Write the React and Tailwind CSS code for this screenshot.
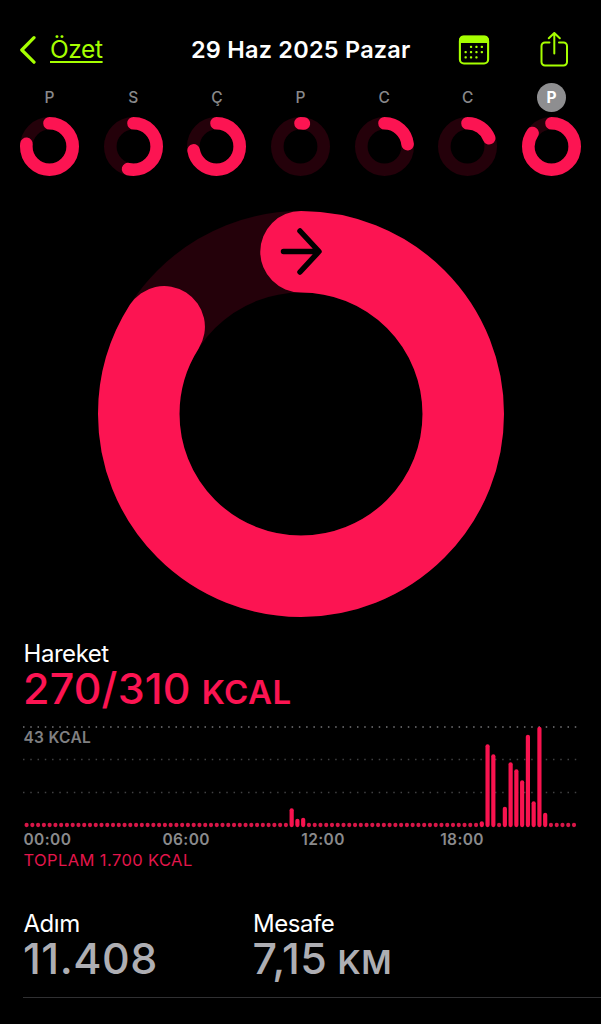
const days = [
  { label: "P", progress: 0.764 },
  { label: "S", progress: 0.535 },
  { label: "Ç", progress: 0.718 },
  { label: "P", progress: 0.024 },
  { label: "C", progress: 0.232 },
  { label: "C", progress: 0.19 },
  { label: "P", progress: 0.843, selected: true },
];

// one bar per 15 minutes, quiet slots stay at the minimum height
const SLOTS = 96;
const activeSlots = {
  46: 19,
  47: 8.5,
  48: 9.5,
  79: 6,
  80: 83,
  81: 73,
  83: 20.5,
  84: 65,
  85: 58,
  86: 47,
  87: 92.5,
  88: 26,
  89: 100.5,
  90: 14.5,
};

function Ring({ size, stroke, progress, children }) {
  const r = (size - stroke) / 2;
  const c = size / 2;
  const length = 2 * Math.PI * r;
  return (
    <svg width={size} height={size} viewBox={`0 0 ${size} ${size}`} className="block shrink-0">
      <circle cx={c} cy={c} r={r} fill="none" stroke="#24010a" strokeWidth={stroke} />
      <circle
        cx={c}
        cy={c}
        r={r}
        fill="none"
        stroke="#fc1452"
        strokeWidth={stroke}
        strokeLinecap="round"
        strokeDasharray={`${length * progress} ${length}`}
        transform={`rotate(-90 ${c} ${c})`}
      />
      {children}
    </svg>
  );
}

function Header() {
  return (
    <header className="flex h-[84px] items-center pt-[15px] pl-5 pr-8">
      <button className="flex w-[171px] items-center text-[#a6ff00]">
        <svg width="17" height="28" viewBox="0 0 17 28" fill="none" stroke="currentColor" strokeWidth="3.2" strokeLinecap="round" strokeLinejoin="round">
          <path d="M14 1.7 1.8 14 14 26.2" />
        </svg>
        <span className="ml-[13px] text-[24.5px] tracking-[-0.4px] underline decoration-[1.5px] underline-offset-[3px]">Özet</span>
      </button>
      <h1 className="w-[267px] whitespace-nowrap text-[23.5px] font-semibold tracking-[0.22px] text-white">29 Haz 2025 Pazar</h1>
      <button className="text-[#a6ff00]">
        <svg width="32" height="30" viewBox="0 0 32 30" fill="none">
          <rect x="1.9" y="1.9" width="28.2" height="26.6" rx="4" stroke="currentColor" strokeWidth="2.1" />
          <path d="M1 8V5a4.5 4.5 0 0 1 4.5-4.5h21A4.5 4.5 0 0 1 31 5v3z" fill="currentColor" />
          <g fill="currentColor">
            {[13, 18.4, 23.8].map((x) => (
              <rect key={x} x={x - 1.1} y="10.7" width="2.3" height="2.3" rx="0.8" />
            ))}
            {[7.6, 13, 18.4, 23.8].map((x) => (
              <rect key={x} x={x - 1.1} y="16" width="2.3" height="2.3" rx="0.8" />
            ))}
            {[7.6, 13, 18.4].map((x) => (
              <rect key={x} x={x - 1.1} y="21.2" width="2.3" height="2.3" rx="0.8" />
            ))}
          </g>
        </svg>
      </button>
      <button className="ml-auto text-[#a6ff00]">
        <svg width="30" height="36" viewBox="0 0 30 36" fill="none" stroke="currentColor" strokeWidth="2" strokeLinecap="round" strokeLinejoin="round">
          <path d="M10.5 10.5H6A3.500 3.500 0 0 0 2.500 14v16A3.500 3.500 0 0 0 6 33.500h18.500A3.500 3.500 0 0 0 28 30V14a3.500 3.500 0 0 0-3.500-3.500H20" />
          <path d="M15.300 21.500V1M9.800 6.300 15.300 1 20.800 6.300" />
        </svg>
      </button>
    </header>
  );
}

function Week() {
  return (
    <div className="flex justify-between px-5">
      {days.map((day, i) => (
        <div key={i} className="flex flex-col items-center">
          <span
            className={
              day.selected
                ? "mt-[-1px] flex h-[29px] w-[29px] items-center justify-center rounded-full bg-[#8e8e90] pt-px text-[15.5px] font-bold text-white"
                : "mt-[-1px] flex h-[29px] w-[29px] items-center justify-center pt-px text-[15.5px] font-medium text-[#89898b]"
            }
          >
            {day.label}
          </span>
          <div className="mt-[5px]">
            <Ring size={59} stroke={12.6} progress={day.progress} />
          </div>
        </div>
      ))}
    </div>
  );
}

function MoveChart() {
  const pitch = 547.4 / (SLOTS - 1);
  return (
    <svg width="556" height="104" viewBox="0 0 556 104" className="block">
      <g stroke="#77777a" strokeWidth="1.5">
        <path d="M0 3H554" strokeDasharray="1.5 5.76" />
        <path d="M0 35.5H554" strokeDasharray="1.5 5.76" opacity="0.55" />
        <path d="M0 68.5H554" strokeDasharray="1.5 5.76" opacity="0.55" />
      </g>
      {Array.from({ length: SLOTS }, (_, i) => {
        const h = activeSlots[i] || 4.4;
        return (
          <rect
            key={i}
            x={3.6 + i * pitch - 2.1}
            y={103.2 - h}
            width="4.2"
            height={h}
            rx="2.1"
            fill={activeSlots[i] ? "#f8134f" : "#d81648"}
          />
        );
      })}
    </svg>
  );
}

function Stat({ label, value, unit, className }) {
  return (
    <div className={className}>
      <p className="ml-[0.5px] h-[28px] text-[24px] leading-[29px] tracking-[-0.45px] text-white">{label}</p>
      <p className="h-[43px] whitespace-nowrap text-[43px] leading-[43px] font-medium tracking-[0.5px] text-[#aeaeb3]">
        {value}
        {unit && <span className="ml-[10px] text-[33px] font-semibold tracking-[0.6px]">{unit}</span>}
      </p>
    </div>
  );
}

export default function App() {
  return (
    <main className="h-[1024px] w-[601px] overflow-hidden bg-black font-['Inter',sans-serif]">
      <Header />
      <Week />
      <div className="mt-[34.5px] flex justify-center pl-px">
        <Ring size={406} stroke={81.5} progress={0.84}>
          <path
            d="M185.500 40.500h35M202 20 221 40.500 202 61"
            fill="none"
            stroke="#000"
            strokeWidth="5.5"
            strokeLinecap="round"
            strokeLinejoin="round"
          />
        </Ring>
      </div>

      <section className="mt-[22px] pl-[23px]">
        <p className="ml-[0.5px] h-[28px] text-[24px] leading-[29px] tracking-[-0.45px] text-white">Hareket</p>
        <p className="h-[43px] whitespace-nowrap text-[43px] leading-[43px] font-medium tracking-[0.15px] text-[#fc1452]">
          270/310<span className="ml-[11px] text-[33px] font-semibold tracking-[0.5px]">KCAL</span>
        </p>
        <div className="relative mt-[14.5px]">
          <MoveChart />
          <span className="absolute top-[4px] left-[0.5px] text-[15.5px] leading-[20px] font-semibold tracking-[0.3px] text-[#808082]">43 KCAL</span>
        </div>
        <div className="mt-[2px] grid w-[556px] grid-cols-4 pl-[0.5px] text-[15.5px] leading-[20px] font-semibold tracking-[0.4px] text-[#8a8a8c]">
          <span>00:00</span>
          <span>06:00</span>
          <span>12:00</span>
          <span>18:00</span>
        </div>
        <p className="ml-[0.5px] text-[16.5px] leading-[20px] tracking-[0.4px] text-[#e3164c]">TOPLAM 1.700 KCAL</p>
      </section>

      <section className="mt-[39px] ml-[23px] flex h-[89px] border-b border-[#303032]">
        <Stat className="w-[229.5px]" label="Adım" value="11.408" />
        <Stat label="Mesafe" value="7,15" unit="KM" />
      </section>
    </main>
  );
}
